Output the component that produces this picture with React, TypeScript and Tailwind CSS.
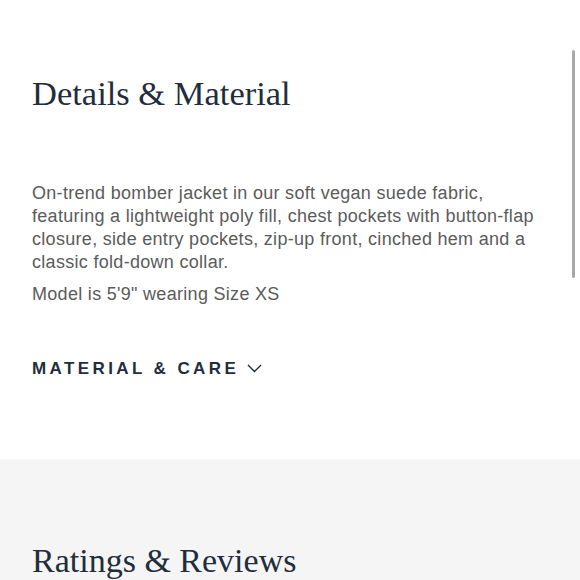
import React from 'react';

export default function App() {
  return (
    <div className="relative w-[580px] h-[580px] overflow-hidden bg-white">
      {/* Details */}
      <section className="px-8 pt-[71px] h-[459px]">
        <h2 className="text-[34.5px] leading-[44px] text-[#1f2d3d] font-['Liberation_Serif',serif]">
          Details &amp; Material
        </h2>
        <div className="mt-[67px] w-[522px] text-[18px] leading-[23px] tracking-[0.3px] text-[#5b5b5b] font-['Liberation_Sans',sans-serif]">
          <p>
            On-trend bomber jacket in our soft vegan suede fabric, featuring a lightweight poly fill, chest pockets with
            button-flap closure, side entry pockets, zip-up front, cinched hem and a classic fold-down collar.
          </p>
          <p className="mt-[9px]">Model is 5'9" wearing Size XS</p>
        </div>
        <button className="mt-[50px] flex items-center gap-[8px] text-[#1f2d3d]">
          <span className="text-[17px] font-bold tracking-[0.2em] font-['Liberation_Sans',sans-serif]">
            MATERIAL &amp; CARE
          </span>
          <svg width="15" height="9" viewBox="0 0 15 9" fill="none" stroke="currentColor" strokeWidth="1.4">
            <polyline points="1,1 7.5,7.5 14,1" />
          </svg>
        </button>
      </section>

      {/* Reviews */}
      <section className="bg-[#f5f5f5] px-8 pt-[80px] h-[200px]">
        <h2 className="text-[34px] leading-[44px] text-[#1f2d3d] font-['Liberation_Serif',serif]">
          Ratings &amp; Reviews
        </h2>
      </section>

      {/* scroll indicator */}
      <div className="absolute right-[5px] top-[50px] w-[3px] h-[228px] rounded-full bg-[#a8a8a8]" />
    </div>
  );
}
